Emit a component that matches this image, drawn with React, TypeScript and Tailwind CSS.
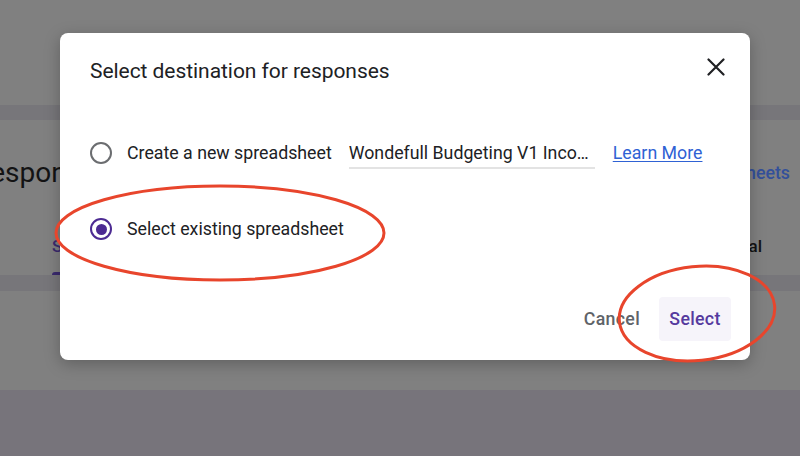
import React from 'react';

const FONT = { fontFamily: 'Roboto, "Noto Sans", Arial, sans-serif' };

const Radio: React.FC<{ checked?: boolean }> = ({ checked }) => (
  <span
    className={
      checked
        ? 'flex h-[22px] w-[22px] shrink-0 items-center justify-center rounded-full border-[2.5px] border-[#4c2a92]'
        : 'flex h-[22px] w-[22px] shrink-0 items-center justify-center rounded-full border-[2.5px] border-[#6b6d70]'
    }
  >
    {checked && <span className="h-[11px] w-[11px] rounded-full bg-[#4c2a92]" />}
  </span>
);

const CloseIcon = () => (
  <svg width="18" height="18" viewBox="0 0 18 18" className="mt-[1px] shrink-0">
    <path d="M1.5 1.5 L16.5 16.5 M16.5 1.5 L1.5 16.5" stroke="#202124" strokeWidth="2.2" strokeLinecap="round" />
  </svg>
);

export default function App() {
  return (
    <div className="relative h-[456px] w-[800px] overflow-hidden bg-[#808080]" style={FONT}>
      {/* dimmed page behind the dialog */}
      <div className="flex h-full flex-col">
        <div className="h-[105px] shrink-0" />
        <div className="h-[15px] shrink-0 bg-[#77767a]" />
        <div className="flex h-[155px] shrink-0 flex-col">
          <div className="mt-[36px] flex items-center justify-between">
            <span className="ml-[-19px] text-[28px] leading-[34px] text-[#131314]">responses</span>
            <span className="mr-[10px] text-[17.75px] font-medium text-[#33509a]">Link to Sheets</span>
          </div>
          <div className="mt-[44px] flex items-center justify-between px-[52px] pr-[38px]">
            <span className="text-[17px] font-medium text-[#3a2a6e]">Summary</span>
            <span className="text-[17px] font-medium text-[#131314]">Individual</span>
          </div>
          <div className="mt-auto ml-[52px] h-[3px] w-[90px] rounded-t bg-[#3a2a6e]" />
        </div>
        <div className="h-[16px] shrink-0 bg-[#77767a]" />
        <div className="h-[99px] shrink-0" />
        <div className="flex-1 bg-[#77747b]" />
      </div>

      {/* dialog */}
      <div className="absolute left-[60px] top-[33px] flex h-[327px] w-[690px] flex-col rounded-lg bg-white pl-[30px] pr-[25px] pt-[24px] shadow-[0_4px_16px_rgba(0,0,0,0.25)]">
        <div className="flex items-start justify-between">
          <h2 className="text-[21px] leading-[28px] tracking-[-0.05px] text-[#202124]">Select destination for responses</h2>
          <CloseIcon />
        </div>

        <div className="mt-[46px] flex h-[44px] items-center">
          <Radio />
          <span className="ml-[15px] text-[17.75px] text-[#202124]">Create a new spreadsheet</span>
          <div className="ml-[17px] w-[246px] border-b-2 border-[#e3e3e3] pb-[2px] pt-[4px]">
            <div className="truncate text-[17.75px] leading-[24px] text-[#202124]">
              Wondefull Budgeting V1 Income and Expenses (Responses)
            </div>
          </div>
          <a className="ml-[18px] text-[17.75px] text-[#2f62d4] underline underline-offset-2">Learn More</a>
        </div>

        <div className="mt-[32px] flex h-[44px] items-center">
          <Radio checked />
          <span className="ml-[15px] text-[17.75px] text-[#202124]">Select existing spreadsheet</span>
        </div>

        <div className="mt-[46px] flex items-center justify-end gap-[19px]">
          <button className="text-[17.75px] font-medium tracking-[0.3px] text-[#5f6368]">Cancel</button>
          <button className="mr-[-6px] flex h-[44px] w-[72px] items-center justify-center rounded bg-[#f6f4fa] text-[17.75px] font-medium tracking-[0.3px] text-[#553a9e]">
            Select
          </button>
        </div>
      </div>

      {/* red annotation marks */}
      <svg className="pointer-events-none absolute inset-0" width="800" height="456" viewBox="0 0 800 456">
        <ellipse cx="220" cy="233" rx="164" ry="47" fill="none" stroke="#e8452c" strokeWidth="3" />
        <ellipse cx="697" cy="313.5" rx="78" ry="47" fill="none" stroke="#e8452c" strokeWidth="3" transform="rotate(-6 697 313.5)" />
      </svg>
    </div>
  );
}
